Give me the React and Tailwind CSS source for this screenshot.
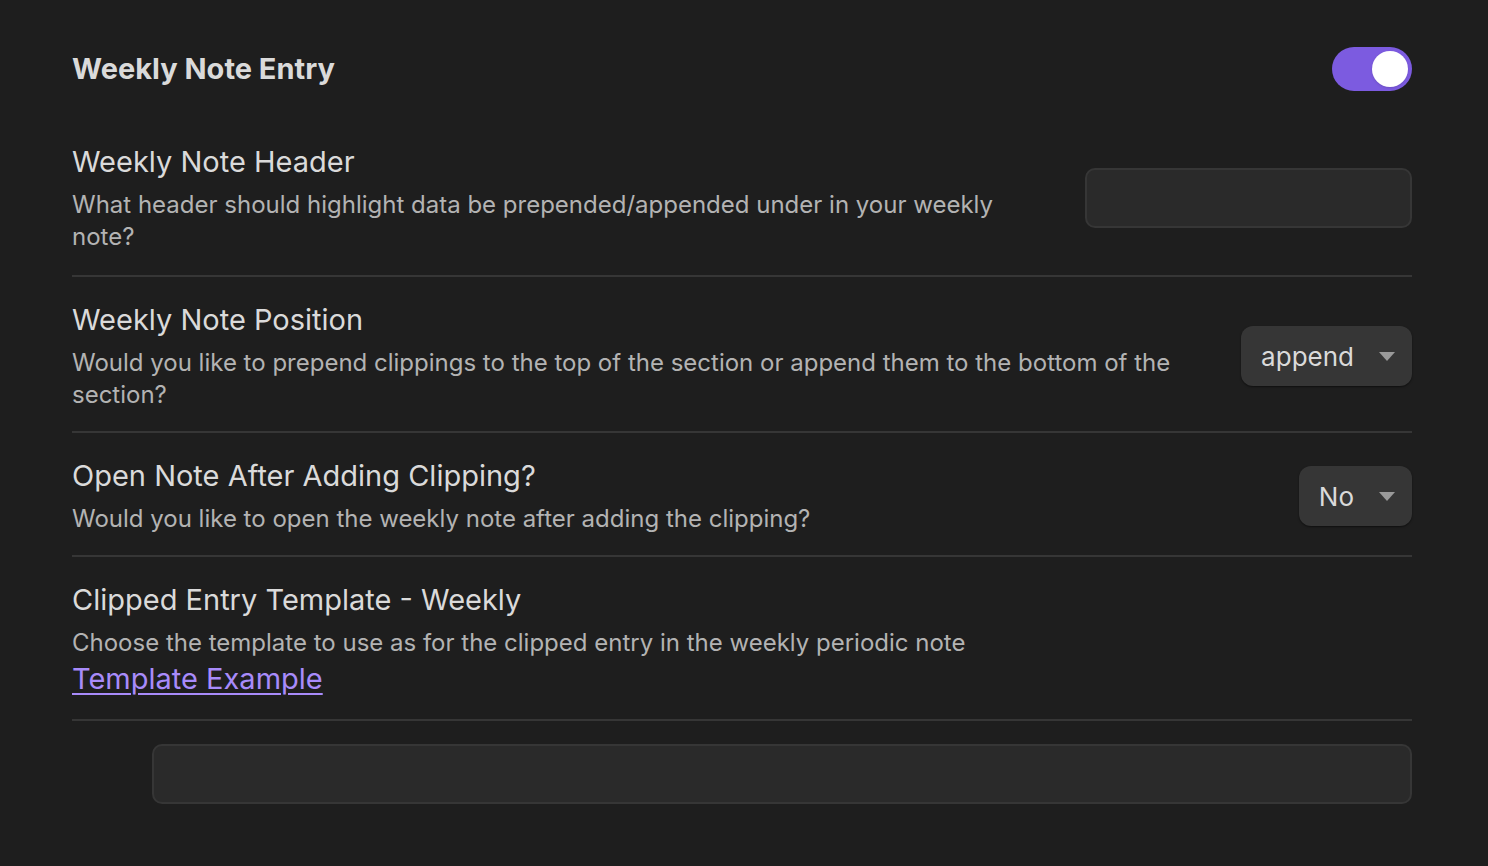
import { useState } from "react";

function Chevron() {
  return (
    <svg width="18" height="12" viewBox="0 0 18 12" className="shrink-0">
      <path d="M1 2h16l-8 9z" fill="#9a9a9a" />
    </svg>
  );
}

function Dropdown({ value }) {
  return (
    <div className="flex h-[60px] items-center gap-6 rounded-xl bg-[#363636] pl-5 pr-4 shadow-[0_1px_2px_rgba(0,0,0,0.5)]">
      <span className="text-[26px] text-[#dadada]">{value}</span>
      <Chevron />
    </div>
  );
}

function SettingRow({ name, children, control }) {
  return (
    <div className="flex items-center gap-8 border-t-2 border-[#363636] pb-[20px] pt-[24px]">
      <div className="min-w-0 flex-1">
        <div className="text-[29px] leading-[38px] text-[#dadada]">{name}</div>
        <div className="mt-2 text-[24px] leading-[32px] text-[#b3b3b3]">{children}</div>
      </div>
      {control}
    </div>
  );
}

export default function App() {
  const [enabled, setEnabled] = useState(true);

  return (
    <div className="min-h-screen bg-[#1e1e1e] px-[72px] pt-[47px] font-['Inter',sans-serif]">
      <div className="w-[1340px]">
        <div className="flex items-center justify-between pb-[52px]">
          <h3 className="text-[29px] font-bold text-[#dadada]">Weekly Note Entry</h3>
          <button
            type="button"
            onClick={() => setEnabled(!enabled)}
            className={`flex h-[44px] w-[80px] items-center rounded-full p-1 ${enabled ? "justify-end bg-[#7c5be0]" : "justify-start bg-[#3f3f3f]"}`}
          >
            <span className="h-9 w-9 rounded-full bg-white shadow" />
          </button>
        </div>

        <div className="flex items-center gap-8 pb-[22px]">
          <div className="min-w-0 flex-1">
            <div className="text-[29px] leading-[38px] text-[#dadada]">Weekly Note Header</div>
            <div className="mt-2 max-w-[930px] text-[24px] leading-[32px] text-[#b3b3b3]">
              What header should highlight data be prepended/appended under in your weekly note?
            </div>
          </div>
          <input
            type="text"
            className="h-[60px] w-[327px] rounded-[10px] border-2 border-[#363636] bg-[#2a2a2a] px-4 text-[26px] text-[#dadada] outline-none"
          />
        </div>

        <SettingRow name="Weekly Note Position" control={<Dropdown value="append" />}>
          Would you like to prepend clippings to the top of the section or append them to the bottom of the section?
        </SettingRow>

        <SettingRow name="Open Note After Adding Clipping?" control={<Dropdown value="No" />}>
          Would you like to open the weekly note after adding the clipping?
        </SettingRow>

        <SettingRow name="Clipped Entry Template - Weekly">
          Choose the template to use as for the clipped entry in the weekly periodic note
          <div>
            <a href="#" className="text-[29px] leading-[40px] text-[#a88bfa] underline decoration-2 underline-offset-4">
              Template Example
            </a>
          </div>
        </SettingRow>

        <div className="flex border-t-2 border-[#363636] pl-[80px] pt-[23px]">
          <input
            type="text"
            className="h-[60px] flex-1 rounded-[10px] border-2 border-[#363636] bg-[#2a2a2a] px-4 text-[26px] text-[#dadada] outline-none"
          />
        </div>
      </div>
    </div>
  );
}
